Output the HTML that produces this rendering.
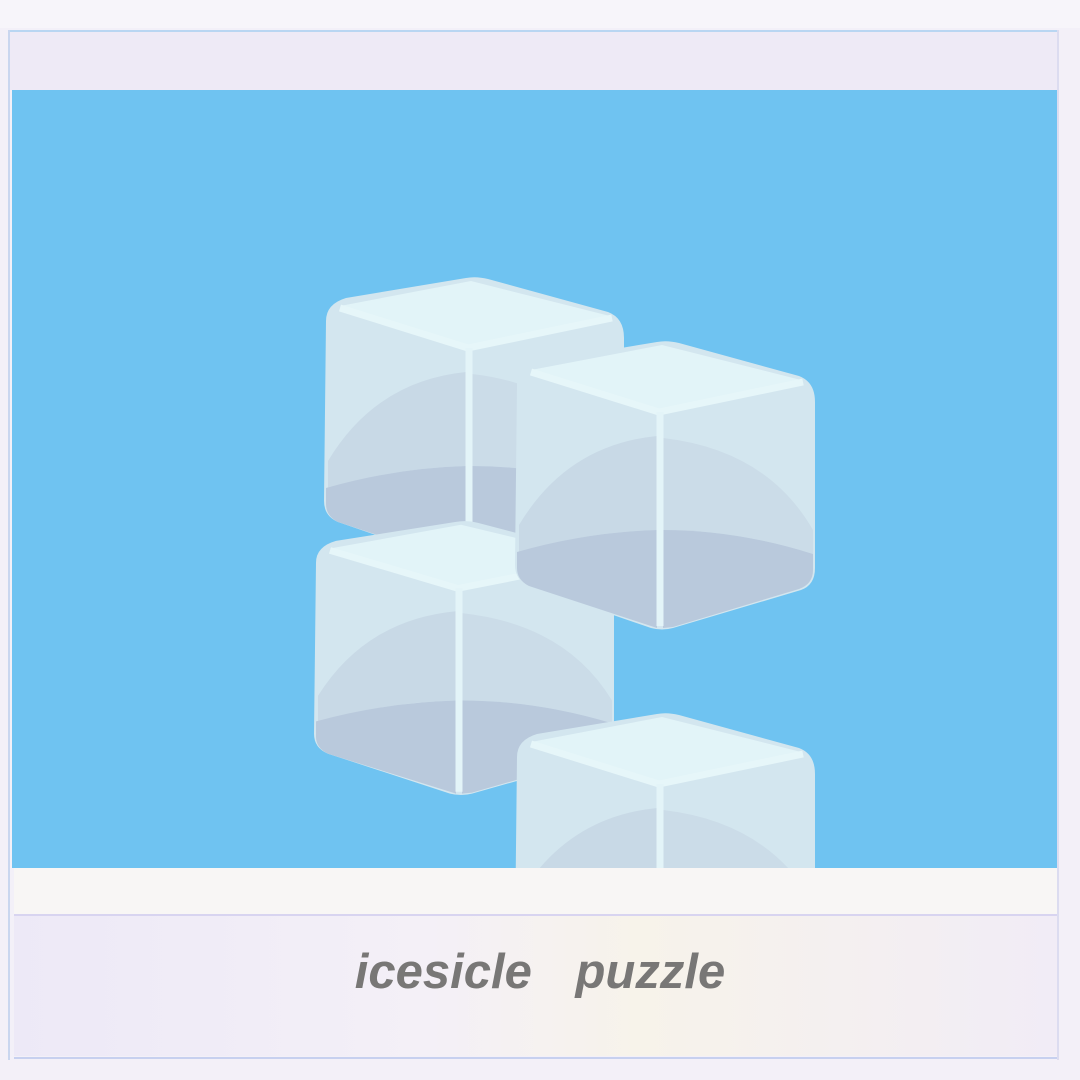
<!DOCTYPE html>
<html><head><meta charset="utf-8"><style>
html,body{margin:0;padding:0;width:1080px;height:1080px;overflow:hidden;background:#f3f0f8;}
.wrap{position:relative;width:1080px;height:1080px;}
.top{position:absolute;left:0;top:0;width:1080px;height:28px;background:#f7f5fa;}
.frameTop{position:absolute;left:10px;top:30px;width:1048px;height:58px;background:#eeeaf6;border-top:2px solid #b9d6f2;}
.blue{position:absolute;left:12px;top:90px;width:1045px;height:778px;background:#6fc3f1;overflow:hidden;}
.strip{position:absolute;left:14px;top:868px;width:1043px;height:46px;background:#f8f6f5;}
.line1{position:absolute;left:14px;top:914px;width:1043px;height:2px;background:#d8d4f0;}
.bottom{position:absolute;left:14px;top:916px;width:1043px;height:140px;background:linear-gradient(90deg,#ede9f7 0%,#f4f0f7 40%,#f7f3ea 60%,#f1ecf6 100%);}
.line2{position:absolute;left:14px;top:1057px;width:1043px;height:2px;background:#c7d0ef;}
.lside{position:absolute;left:8px;top:30px;width:2px;height:1030px;background:#c9d6ef;}
.rside{position:absolute;left:1057px;top:30px;width:2px;height:1030px;background:#dcdcf0;}
.txt{position:absolute;left:0;width:1080px;top:944px;text-align:center;font-family:"Liberation Sans",sans-serif;font-style:italic;font-weight:bold;font-size:49px;color:#787776;letter-spacing:0px;word-spacing:30px;}
</style></head><body><div class="wrap">
<div class="top"></div>
<div class="frameTop"></div>
<div class="lside"></div><div class="rside"></div>
<div class="blue">
<svg width="1045" height="778" viewBox="12 90 1045 778" xmlns="http://www.w3.org/2000/svg">
<defs>
<g id="cube">
<path d="M10,45 Q10,28 30,22 L150,2 Q160,0 172,3 L292,36 Q308,42 308,62 L308,228 Q308,245 294,250 L166,288 Q155,291 144,288 L22,246 Q8,240 8,225 Z" fill="#d3e6ef"/>
<path d="M24,30 L155,5 L294,40 L152,72 Z" fill="#e2f4f8"/>
<path d="M12,185 Q60,105 150,96 L150,190 Q80,192 12,212 Z" fill="#c8d9e6"/>
<path d="M306,190 Q260,110 156,98 L156,190 Q230,190 306,214 Z" fill="#cbdce8"/>
<path d="M10,212 Q80,192 150,190 L150,288 L22,246 Q10,240 10,228 Z" fill="#b9c9dc"/>
<path d="M156,190 Q230,190 306,214 L306,230 Q306,244 292,249 L166,287 L156,288 Z" fill="#b9c9dc"/>
<path d="M24,32 L152,72 L296,42" fill="none" stroke="#e6f6f9" stroke-width="7" stroke-linejoin="round"/>
<line x1="153" y1="72" x2="153" y2="286" stroke="#e3f4f8" stroke-width="7"/>
</g>
</defs>
<use href="#cube" transform="translate(316,276)"/>
<use href="#cube" transform="translate(306,520) scale(1,0.95)"/>
<use href="#cube" transform="translate(507,340)"/>
<use href="#cube" transform="translate(507,712)"/>
</svg>
</div>
<div class="strip"></div>
<div class="line1"></div>
<div class="bottom"></div>
<div class="line2"></div>
<div class="txt">icesicle puzzle</div>
</div></body></html>
